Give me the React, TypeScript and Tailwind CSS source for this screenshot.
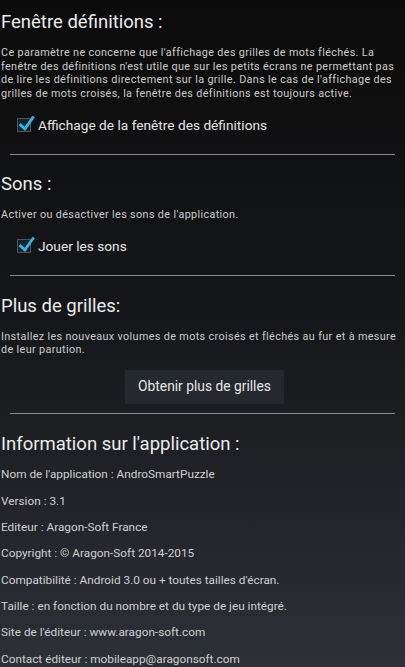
import React from "react";

function Check() {
  return (
    <span className="relative inline-block w-[14px] h-[14px] border border-[#50565d] bg-[#17232a] shrink-0">
      <svg viewBox="0 0 16 16" className="absolute left-[0px] top-[-4px] w-[17px] h-[17px]">
        <path d="M2.5 9.5 L6.5 13 L14 2.5" fill="none" stroke="#35b4e2" strokeWidth="2.7" strokeLinecap="square" />
      </svg>
    </span>
  );
}

function Divider({ mt }: { mt: string }) {
  return <div className={`${mt} mx-[10px] h-px bg-[#8c8c8c]`} />;
}

const para = "text-[10.8px] leading-[13.5px] tracking-[0.36px] text-[#cdcdcd] pl-[1px] whitespace-nowrap";
const title = "text-[18.5px] leading-[26px] text-[#ececec] pl-[1px]";

export default function App() {
  const info = [
    "Nom de l'application : AndroSmartPuzzle",
    "Version : 3.1",
    "Editeur : Aragon-Soft France",
    "Copyright : © Aragon-Soft 2014-2015",
    "Compatibilité : Android 3.0 ou + toutes tailles d'écran.",
    "Taille : en fonction du nombre et du type de jeu intégré.",
    "Site de l'éditeur : www.aragon-soft.com",
    "Contact éditeur : mobileapp@aragonsoft.com",
  ];
  return (
    <div
      className="w-[405px] h-[667px] overflow-hidden bg-gradient-to-b from-[#0b0b0b] via-[#17181b] to-[#2d3036] text-[#e6e6e6]"
      style={{ fontFamily: "Roboto, 'Liberation Sans', sans-serif" }}
    >
      <div className="pt-[9px]">
        <h1 className={title}>Fenêtre définitions :</h1>
        <p className={`mt-[11px] ${para}`}>
          Ce paramètre ne concerne que l'affichage des grilles de mots fléchés. La
          <br />
          fenêtre des définitions n'est utile que sur les petits écrans ne permettant pas
          <br />
          de lire les définitions directement sur la grille. Dans le cas de l'affichage des
          <br />
          grilles de mots croisés, la fenêtre des définitions est toujours active.
        </p>
        <div className="mt-[14px] flex items-center gap-[7px] pl-[17px] h-[22px]">
          <Check />
          <span className="text-[13.7px] leading-[22px]">Affichage de la fenêtre des définitions</span>
        </div>
        <Divider mt="mt-[17.7px]" />

        <h1 className={`mt-[16.4px] ${title}`}>Sons :</h1>
        <p className={`mt-[11.2px] ${para}`}>Activer ou désactiver les sons de l'application.</p>
        <div className="mt-[12.9px] flex items-center gap-[7px] pl-[17px] h-[22px]">
          <Check />
          <span className="text-[13.7px] leading-[22px]">Jouer les sons</span>
        </div>
        <Divider mt="mt-[18.5px]" />

        <h1 className={`mt-[16.9px] ${title}`}>Plus de grilles:</h1>
        <p className={`mt-[10.9px] ${para}`}>
          Installez les nouveaux volumes de mots croisés et fléchés au fur et à mesure
          <br />
          de leur parution.
        </p>
        <div className="mt-[12.7px] flex justify-center">
          <div className="w-[159px] h-[34px] bg-[#25282d] flex items-center justify-center text-[13.8px] ml-[4px]">
            Obtenir plus de grilles
          </div>
        </div>
        <Divider mt="mt-[9px]" />

        <h1 className={`mt-[17.4px] ${title}`}>Information sur l'application :</h1>
        <div className="mt-[4.1px] flex flex-col text-[11.8px] text-[#d0d0d0] pl-[1px]">
          {info.map((t) => (
            <div key={t} className="h-[26.4px] leading-[26.4px] whitespace-nowrap">{t}</div>
          ))}
        </div>
      </div>
    </div>
  );
}
